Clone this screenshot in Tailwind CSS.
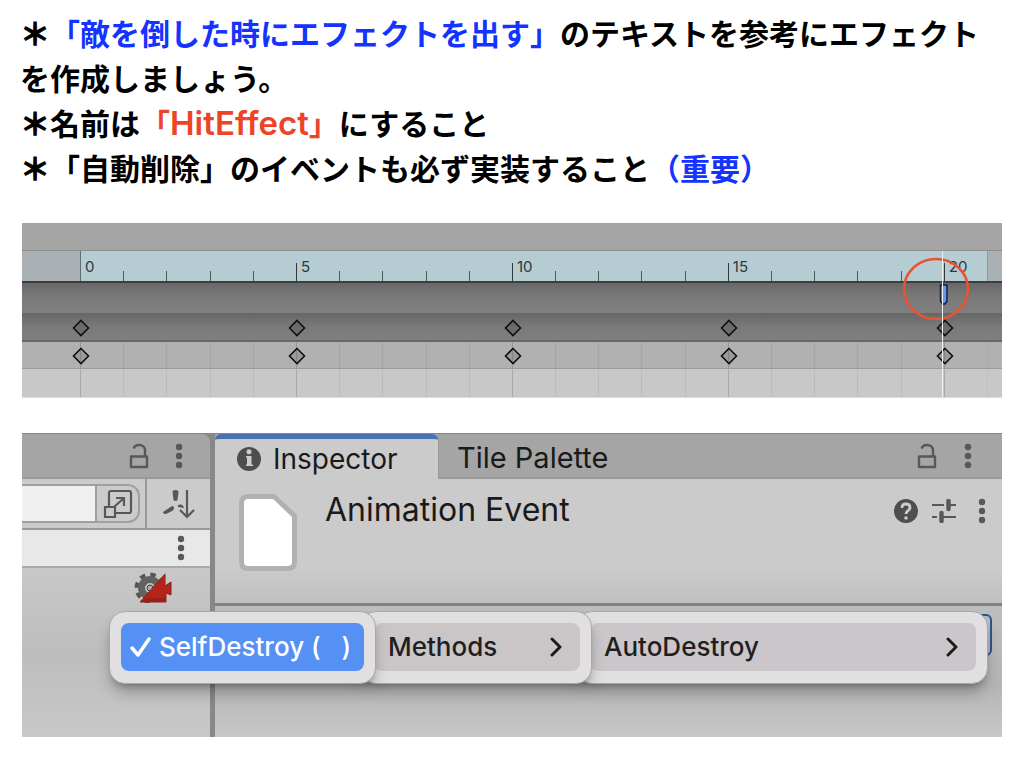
<!DOCTYPE html>
<html lang="ja">
<head>
<meta charset="utf-8">
<meta name="viewport" content="width=device-width, initial-scale=1">
<title>HitEffect</title>
<script src="https://cdn.jsdelivr.net/npm/@tailwindcss/browser@4"></script>
</head>
<body class="bg-white font-['Inter','Noto_Sans_CJK_JP',sans-serif] text-[#1a1a1a]">
<svg class="hidden">
  <symbol id="lock" viewBox="0 0 20 26"><path d="M4.500 5.500C5.500 3 7.500 2 10 2c3.500 0 6 2 6 5.500v6M2 13.500h16V24H2z" fill="none" stroke="#585858" stroke-width="2.400" stroke-linejoin="round"/></symbol>
  <symbol id="dots" viewBox="0 0 8 26"><g fill="#585858"><circle cx="4" cy="4" r="3.200"/><circle cx="4" cy="13" r="3.200"/><circle cx="4" cy="22" r="3.200"/></g></symbol>
  <symbol id="key" viewBox="0 0 18 18"><path d="M9 1.500 16.500 9 9 16.500 1.500 9z" fill="#000" fill-opacity=".12" stroke="#111" stroke-width="1.600"/></symbol>
  <symbol id="chevron" viewBox="0 0 14 20"><path d="M3 2l8 8-8 8" fill="none" stroke="#1c1c1c" stroke-width="3" stroke-linecap="round" stroke-linejoin="round"/></symbol>
</svg>

<main>
  <div class="px-5 pt-[10px] text-[30px] leading-[45px] font-bold text-black font-['Noto_Sans_CJK_JP',sans-serif]">
    <p><span class="[-webkit-text-stroke:1px_black]">＊</span><span class="text-[#1433ff]">「敵を倒した時にエフェクトを出す」</span>のテキストを参考にエフェクトを作成しましょう。</p>
    <p><span class="[-webkit-text-stroke:1px_black]">＊</span>名前は<span class="text-[#ee4426]">「<span class="font-['Inter'] text-[33px] leading-none font-semibold">HitEffect</span>」</span>にすること</p>
    <p><span class="[-webkit-text-stroke:1px_black]">＊</span>「自動削除」のイベントも必ず実装すること<span class="text-[#1433ff]">（重要）</span></p>
  </div>

  <!-- Animation timeline -->
  <section class="relative mx-[22px] mt-[33px] overflow-hidden">
    <div class="h-7 border-b border-[#8f8f8f] bg-[#a5a5a5]"></div>
    <div class="flex h-8 border-b-2 border-[#3d3d3d] bg-[#a9b1b4]">
      <div class="w-[58px]"></div>
      <div id="ruler" class="grid flex-1 grid-cols-21 bg-[#b5ccd2]"></div>
      <div class="w-[15px] border-l border-[#8f9a9e]"></div>
    </div>
    <div class="h-[30px] bg-linear-to-b from-[#686868] via-[#7b7b7b] to-[#7f7f7f]"></div>
    <div class="flex h-[29px] border-b-2 border-[#686868] bg-linear-to-b from-[#666666] via-[#7a7a7a] to-[#7f7f7f]">
      <div class="w-[58px]"></div><div id="summary" class="grid flex-1 grid-cols-21"></div><div class="w-[15px]"></div>
    </div>
    <div class="flex h-[27px] border-b border-[#9c9c9c] bg-[#b1b1b1]">
      <div class="w-[58px]"></div><div id="track" class="grid flex-1 grid-cols-21"></div><div class="w-[15px] border-l border-[#a9a9a9]"></div>
    </div>
    <div class="flex h-[29px] border-b border-[#dddddd] bg-[#c8c8c8]">
      <div class="w-[58px]"></div><div id="empty" class="grid flex-1 grid-cols-21"></div><div class="w-[15px] border-l border-[#bfbfbf]"></div>
    </div>
    <!-- Event marker, playhead and highlight ring -->
    <svg class="absolute top-[34px] right-[32px] h-[64px] w-[68px]" viewBox="0 0 68 64" fill="none">
      <path d="M38.500 28h6.500v16l-2 3h-2.500l-2-3z" fill="#6697f5" stroke="#14203c" stroke-width="1.500"/>
      <ellipse cx="34" cy="32" rx="32" ry="30" stroke="#ea5230" stroke-width="2.500"/>
    </svg>
    <div class="absolute top-7 right-[59px] bottom-0 w-px bg-[#eeeeee]"></div>
  </section>

  <!-- Inspector -->
  <section class="relative mx-[22px] mt-[35px] flex h-[304px] overflow-hidden bg-[#888888]">
    <div class="flex w-[188px] flex-col bg-[#c8c8c8]">
      <div class="bg-[#888888]">
        <div class="flex h-[46px] items-center justify-end gap-[26px] rounded-tr-lg border-t border-b-2 border-t-[#858585] border-b-[#999999] bg-[#a5a5a5] pr-[27px]">
          <button aria-label="Lock"><svg class="h-[26px] w-5"><use href="#lock"/></svg></button>
          <button aria-label="More"><svg class="h-[26px] w-2"><use href="#dots"/></svg></button>
        </div>
      </div>
      <div class="flex h-[51px] border-b-2 border-[#999999] bg-[#cbcbcb]">
        <div class="flex min-w-0 flex-1 items-center border-r-2 border-[#999999] pr-[5px]">
          <div class="flex h-[39px] min-w-0 flex-1 overflow-hidden rounded-r-xl border-2 border-l-0 border-[#a0a0a0]">
            <input aria-label="Search" class="w-0 min-w-0 flex-1 bg-[#f0f0f0] outline-none">
            <button aria-label="Expand" class="flex w-[43px] shrink-0 items-center justify-center border-l-2 border-[#a0a0a0]">
              <svg class="h-[30px] w-[30px]" viewBox="0 0 30 30" fill="none" stroke="#585858" stroke-width="2.200"><path d="M6 17V4q0-2 2-2h18q2 0 2 2v18q0 2-2 2H12M11 18 21 9M13 9h8v8M2 18h10v10H2z"/></svg>
            </button>
          </div>
        </div>
        <button aria-label="Sort" class="flex w-[63px] shrink-0 items-center justify-center">
          <svg class="h-[30px] w-[34px]" viewBox="0 0 34 30"><path d="M10.500 3q0-2 3-2t3 2L15.500 11q-2 2-4 0zM1 23l9-6q2 0 2 2 0 2-2 3l-6 3q-3 0-3-2zM16 16q5-2 6 3l-6-1z" fill="#585858"/><path d="M25 1v27M18 21l7 7 7-7" fill="none" stroke="#585858" stroke-width="2.200"/></svg>
        </button>
      </div>
      <div class="flex h-[38px] items-center justify-end border-b-2 border-[#aaaaaa] bg-[#e8e8e8] pr-[25px]">
        <button aria-label="Row menu"><svg class="h-[26px] w-2"><use href="#dots"/></svg></button>
      </div>
      <div class="flex flex-1 items-start justify-end bg-linear-to-b from-[#c8c8c8] via-[#bdbdbd] to-[#c8c8c8] pt-[3px] pr-[38px]">
        <svg class="h-8 w-[38px]" viewBox="0 0 38 32">
          <circle cx="16" cy="17" r="13" fill="none" stroke="#555" stroke-width="5" stroke-dasharray="5.200 5"/>
          <circle cx="16" cy="17" r="8.500" fill="none" stroke="#626262" stroke-width="7"/>
          <circle cx="16" cy="17" r="3" fill="#aaa" stroke="#444"/>
          <path d="M6 31 31 3v12l6-4v13l-5-2v9z" fill="#b42418" stroke="#8f2018"/>
          <path d="M7 31h25v-4H11z" fill="#9c2017"/>
        </svg>
      </div>
    </div>
    <div class="w-[5px]"></div>
    <div class="flex min-w-0 flex-1 flex-col bg-[#cbcbcb]">
      <div class="flex h-[46px] border-t border-[#858585] bg-[#a5a5a5]">
        <button class="flex w-[223px] items-center gap-3 rounded-t-md border-t-5 border-[#4871b3] bg-[#cbcbcb] pl-[22px] text-[28px] leading-9">
          <svg class="h-6 w-6" viewBox="0 0 24 24"><circle cx="12" cy="12" r="12" fill="#4e4e4e"/><circle cx="12" cy="4.800" r="2.500" fill="#ccc"/><path d="M9 9h5.500v8.500H16V19H9v-1.500h1V10.500H9z" fill="#ccc"/></svg>
          <span>Inspector</span>
        </button>
        <div class="flex flex-1 items-center border-b-2 border-l border-[#999999] pr-[30px]">
          <button class="pt-1 pl-[18px] text-[29px] leading-9">Tile Palette</button>
          <button aria-label="Lock" class="ml-auto"><svg class="h-[26px] w-5"><use href="#lock"/></svg></button>
          <button aria-label="More" class="ml-[27px]"><svg class="h-[26px] w-2"><use href="#dots"/></svg></button>
        </div>
      </div>
      <div class="flex h-[127px] items-start border-b-3 border-[#818181] bg-linear-to-b from-[#cbcbcb] from-70% to-[#c0c0c0] pt-[15px] pr-4 pl-6">
        <svg class="h-[77px] w-[58px]" viewBox="0 0 58 77"><path d="M9 2.500h26L55.500 22v46q0 6.500-7 6.500H9q-6.500 0-6.500-6.500V9q0-6.500 6.500-6.500z" fill="#fff" stroke="#b1b1b1" stroke-width="5"/></svg>
        <h2 class="ml-[28px] text-[32px] leading-8">Animation Event</h2>
        <div class="ml-auto flex items-center gap-[14px] pt-1">
          <button aria-label="Help"><svg class="h-6 w-6" viewBox="0 0 24 24"><circle cx="12" cy="12" r="12" fill="#4e4e4e"/><path d="M8 9q0-4 4-4t4 3.500q0 2-2 3.200T12 15" fill="none" stroke="#ccc" stroke-width="2.800"/><circle cx="12" cy="19" r="1.800" fill="#ccc"/></svg></button>
          <button aria-label="Presets"><svg class="h-6 w-6" viewBox="0 0 24 24" fill="none" stroke="#585858"><path d="M0 6h12M16 6h8M0 18h5M9 18h15" stroke-width="2"/><path d="M16.500 2v8M9.500 14v8" stroke-width="4.500" stroke-linecap="round"/></svg></button>
          <button aria-label="More" class="ml-2"><svg class="h-[26px] w-2"><use href="#dots"/></svg></button>
        </div>
      </div>
      <div class="flex-1 bg-linear-to-b from-[#bebebe] via-[#b5b5b5] via-60% to-[#c8c8c8]"></div>
    </div>

    <!-- Cascading method menu over the panel -->
    <div class="absolute top-[181px] right-[10px] h-[42px] w-10 rounded-md border-2 border-[#2b5596]"></div>
    <nav class="absolute top-[178px] right-[14px] left-[87px] flex text-[26px] leading-8 font-medium text-[#1f1f1f]">
      <div class="z-20 h-[73px] w-[267px] rounded-2xl border border-[#a8a8a8] bg-[#e2dfe3] p-[11px] shadow-lg shadow-black/30">
        <button class="flex h-12 w-full items-center rounded-lg bg-[#5591f5] pl-[9px] text-white">
          <svg class="mr-2 h-[22px] w-[21px]" viewBox="0 0 21 22"><path d="M2 12l6 7L19 3" fill="none" stroke="#fff" stroke-width="3.500" stroke-linecap="round" stroke-linejoin="round"/></svg>
          <span class="whitespace-pre">SelfDestroy (   )</span>
        </button>
      </div>
      <div class="z-10 -ml-4 h-[73px] w-[232px] rounded-2xl border border-[#a8a8a8] bg-[#e2dfe1] py-[11px] pr-[11px] pl-[13px] shadow-lg shadow-black/30">
        <button class="flex h-12 w-full items-center justify-between rounded-lg bg-[#cac6c8] pr-[17px] pl-[14px]"><span>Methods</span><svg class="h-5 w-[14px]"><use href="#chevron"/></svg></button>
      </div>
      <div class="-ml-4 h-[73px] flex-1 rounded-2xl border border-[#a8a8a8] bg-[#e2dfe2] py-[11px] pr-[11px] pl-[13px] shadow-lg shadow-black/30">
        <button class="flex h-12 w-full items-center justify-between rounded-lg bg-[#cac6c9] pr-[17px] pl-[14px]"><span>AutoDestroy</span><svg class="h-5 w-[14px]"><use href="#chevron"/></svg></button>
      </div>
    </nav>
  </section>
</main>

<script>
  const fill = (id, cell) => {
    document.getElementById(id).innerHTML = Array.from({ length: 21 }, (_, i) => cell(i)).join('');
  };
  const diamond = '<svg class="-ml-[9px] h-[18px] w-[18px] shrink-0"><use href="#key"/></svg>';
  fill('ruler', i => {
    if (i === 0) return '<div class="border-l border-[#5f6c70] pt-[6px] pl-1 text-[15px] leading-5 text-[#30383b]">0</div>';
    if (i % 5 === 0) return '<div class="flex min-w-0 items-end"><div class="h-[18px] w-px bg-[#30383b]"></div><div class="self-start pt-[6px] pl-1 text-[15px] leading-5 text-[#30383b]">' + i + '</div></div>';
    return '<div class="flex items-end"><div class="h-[10px] w-px bg-[#4c585c]"></div></div>';
  });
  fill('summary', i => '<div class="flex min-w-0 items-center border-l border-transparent pt-[3px]">' + (i % 5 ? '' : diamond) + '</div>');
  fill('track', i => i % 5
    ? '<div class="border-l border-[#a5a5a5]"></div>'
    : '<div class="flex min-w-0 items-center border-l border-[#999999] pt-[2px]">' + diamond + '</div>');
  fill('empty', i => i % 5
    ? '<div class="border-l border-[#bbbbbb]"></div>'
    : '<div class="border-l border-[#a9a9a9]"></div>');
</script>
</body>
</html>
